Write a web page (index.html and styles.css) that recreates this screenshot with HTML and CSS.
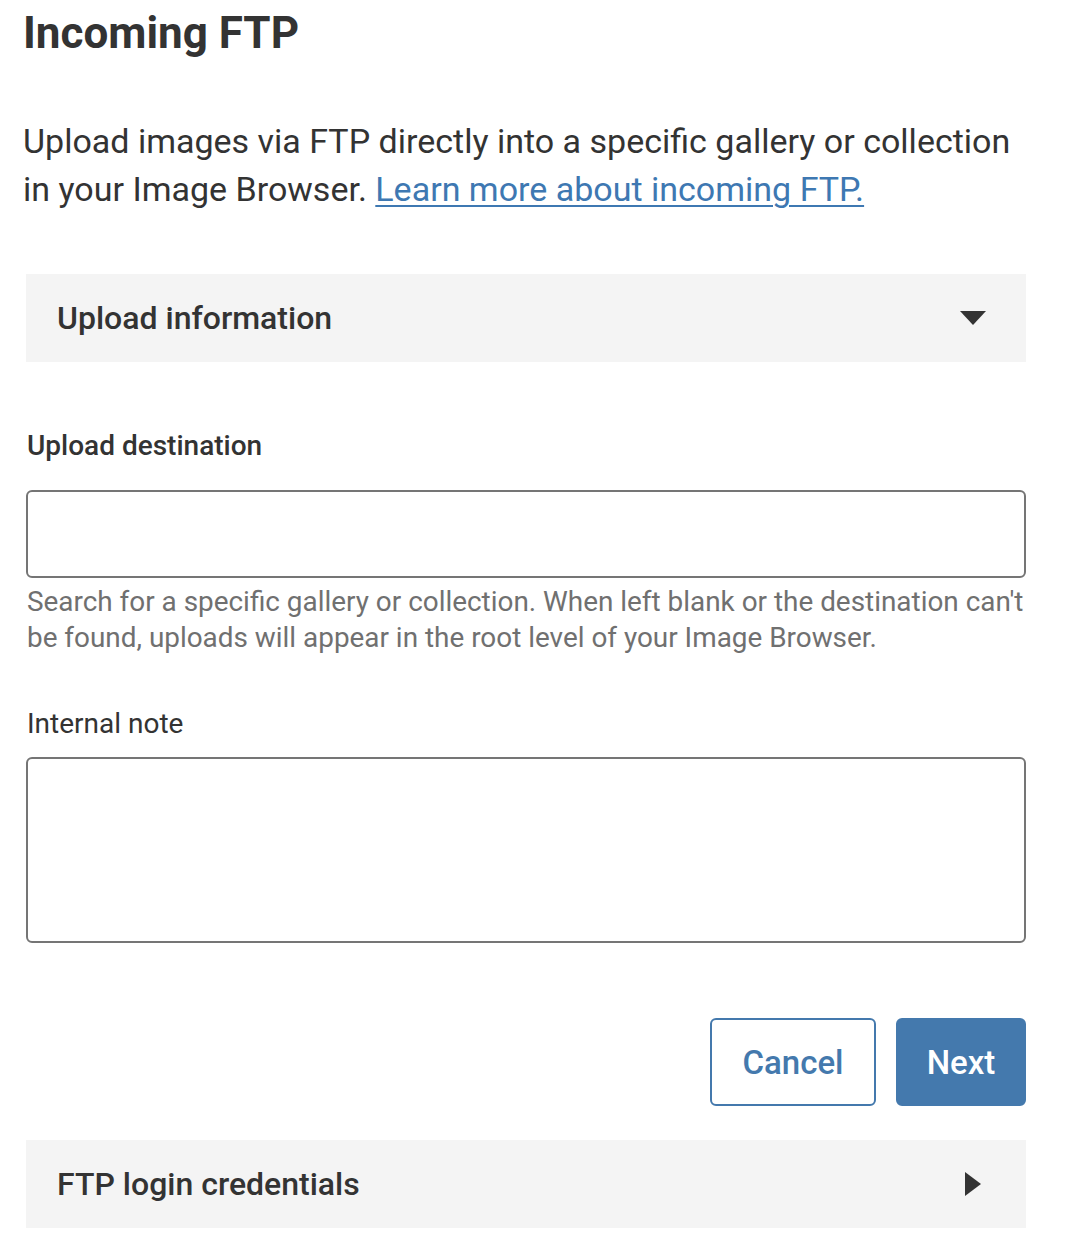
FILE: index.html
```html
<!DOCTYPE html>
<html lang="en">
<head>
  <meta charset="UTF-8">
  <meta name="viewport" content="width=device-width, initial-scale=1.0">
  <title>Incoming FTP</title>
  <link rel="stylesheet" href="styles.css">
</head>
<body>
  <h1>Incoming FTP</h1>
  <p class="intro">Upload images via FTP directly into a specific gallery or collection in your Image Browser. <a href="#">Learn more about incoming FTP.</a></p>

  <div class="panel">
    <div class="panel-header">
      <span>Upload information</span>
      <span class="caret caret-down"></span>
    </div>

    <form class="upload-form">
      <label class="field-label strong" for="destination">Upload destination</label>
      <input type="text" id="destination">
      <p class="hint">Search for a specific gallery or collection. When left blank or the destination can't be found, uploads will appear in the root level of your Image Browser.</p>

      <label class="field-label" for="note">Internal note</label>
      <textarea id="note"></textarea>

      <div class="actions">
        <button type="button" class="btn btn-outline">Cancel</button>
        <button type="button" class="btn btn-primary">Next</button>
      </div>
    </form>

    <div class="panel-header">
      <span>FTP login credentials</span>
      <span class="caret caret-right"></span>
    </div>
  </div>
</body>
</html>
```

FILE: styles.css
```css
body {
  font-family: Roboto, 'Liberation Sans', sans-serif;
  margin: 0;
  padding: 0 24px 0 23px;
  color: #333;
  background: #fff;
}

h1 {
  margin: 0;
  padding-top: 7px;
  font-size: 44px;
  font-weight: 700;
  line-height: 52px;
}

.intro {
  margin: 58px 0 0;
  font-size: 34px;
  line-height: 48px;
  width: 1000px;
}

.intro a {
  color: #3e78b2;
  text-decoration: underline;
  text-underline-offset: 4px;
  text-decoration-thickness: 2px;
}

.panel {
  margin: 61px 0 0 3px;
  width: 1000px;
}

.panel-header {
  display: flex;
  align-items: center;
  justify-content: space-between;
  height: 88px;
  padding: 0 40px 0 31px;
  background: #f4f4f4;
  font-size: 32px;
  font-weight: 500;
}

.caret {
  width: 0;
  height: 0;
}

.caret-down {
  border-left: 13px solid transparent;
  border-right: 13px solid transparent;
  border-top: 14px solid #333;
}

.caret-right {
  margin-right: 5px;
  border-top: 12px solid transparent;
  border-bottom: 12px solid transparent;
  border-left: 16px solid #333;
}

.upload-form {
  display: flex;
  flex-direction: column;
  padding-top: 66px;
}

.field-label {
  font-size: 28px;
  line-height: 36px;
  margin-left: 1px;
}

.field-label.strong {
  font-weight: 500;
}

input,
textarea {
  box-sizing: border-box;
  width: 100%;
  border: 2px solid #757575;
  border-radius: 6px;
  font-family: inherit;
  font-size: 27px;
  padding: 10px 16px;
  resize: none;
}

input {
  height: 88px;
  margin-top: 26px;
}

textarea {
  height: 186px;
  margin-top: 15px;
}

.hint {
  margin: 6px -12px 0 1px;
  font-size: 27.9px;
  line-height: 36px;
  color: #707070;
}

.hint + .field-label {
  margin-top: 50px;
}

.actions {
  display: flex;
  justify-content: flex-end;
  gap: 20px;
  margin-top: 75px;
  margin-bottom: 34px;
}

.btn {
  height: 88px;
  border-radius: 6px;
  font-family: inherit;
  font-size: 33px;
  font-weight: 500;
  cursor: pointer;
  padding: 0;
}

.btn-outline {
  width: 166px;
  background: #fff;
  color: #4479ad;
  border: 2px solid #4479ad;
}

.btn-primary {
  width: 130px;
  background: #4479ad;
  color: #fff;
  border: 2px solid #4479ad;
}
```
